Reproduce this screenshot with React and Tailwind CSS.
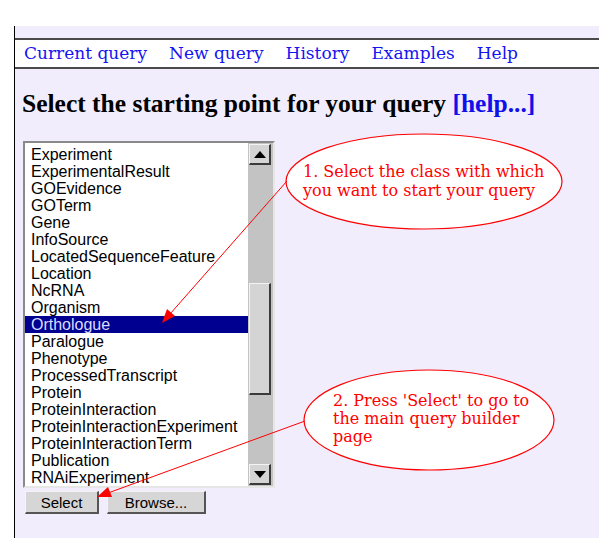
import React from 'react';

const classes = [
  'Experiment',
  'ExperimentalResult',
  'GOEvidence',
  'GOTerm',
  'Gene',
  'InfoSource',
  'LocatedSequenceFeature',
  'Location',
  'NcRNA',
  'Organism',
  'Orthologue',
  'Paralogue',
  'Phenotype',
  'ProcessedTranscript',
  'Protein',
  'ProteinInteraction',
  'ProteinInteractionExperiment',
  'ProteinInteractionTerm',
  'Publication',
  'RNAiExperiment',
];

const navLinks = ['Current query', 'New query', 'History', 'Examples', 'Help'];

const serif = { fontFamily: '"DejaVu Serif", serif' };

// little raised 3D box used for scroll arrows / thumb
const Raised = ({ className = '', children }) => (
  <div
    className={`bg-[#d4d4d4] border-t border-l border-[#f4f4f4] border-r-2 border-b-2 border-r-[#3a3a3a] border-b-[#3a3a3a] ${className}`}
  >
    {children}
  </div>
);

const Button = ({ label, width }) => (
  <button
    className={`${width} h-[23px] bg-[#d6d6d6] border-t border-l border-[#f4f4f4] border-r-2 border-b-2 border-r-[#555] border-b-[#555] text-[15px] text-black leading-none`}
  >
    {label}
  </button>
);

const App = () => {
  return (
    <div
      className="relative w-[616px] h-[556px] bg-white overflow-hidden"
      style={{ fontFamily: '"Liberation Sans", Arial, sans-serif' }}
    >
      <div className="ml-[14px] mt-[26px] w-[585px] h-[512px] bg-[#f1edfd] border-l border-black pt-[12px]">
        {/* nav bar */}
        <div
          className="h-[31px] bg-white border-t-2 border-b-2 border-[#4a4a4a] flex items-center gap-[22px] pl-[9px] text-[17px] text-[#1414f0]"
          style={serif}
        >
          {navLinks.map((l) => (
            <span key={l}>{l}</span>
          ))}
        </div>

        {/* heading */}
        <h1
          className="mt-[21px] pl-[7px] text-[25.5px] font-bold text-black leading-[28px] whitespace-nowrap"
          style={{ fontFamily: '"Liberation Serif", "Times New Roman", serif' }}
        >
          Select the starting point for your query{' '}
          <span className="text-[#1010e8]">[help...]</span>
        </h1>

        {/* listbox */}
        <div className="ml-[8px] mt-[23px] w-[252px] h-[347px] border-t-2 border-l-2 border-[#8a8a8a] border-r-2 border-b-2 border-r-[#e6e6e6] border-b-[#e6e6e6] flex">
          <div className="w-[223px] h-full bg-white pt-[3px] overflow-hidden text-[16px] text-black">
            {classes.map((c) => (
              <div
                key={c}
                className={`h-[17px] leading-[17px] pl-[6px] whitespace-nowrap ${
                  c === 'Orthologue' ? 'bg-[#000090] text-[#dcdcff]' : ''
                }`}
              >
                {c}
              </div>
            ))}
          </div>
          <div className="w-[25px] h-full bg-[#c3c3c3] flex flex-col pl-[1px] pr-[2px] pt-[1px] pb-[1px]">
            <Raised className="h-[21px] flex items-center justify-center">
              <svg width="12" height="7" viewBox="0 0 12 7">
                <polygon points="6,0 12,7 0,7" fill="#000" />
              </svg>
            </Raised>
            <div className="h-[118px]" />
            <Raised className="h-[112px]" />
            <div className="flex-1" />
            <Raised className="h-[21px] flex items-center justify-center">
              <svg width="12" height="7" viewBox="0 0 12 7">
                <polygon points="0,0 12,0 6,7" fill="#000" />
              </svg>
            </Raised>
          </div>
        </div>

        {/* buttons */}
        <div className="ml-[10px] mt-[3px] flex gap-[8px]">
          <Button label="Select" width="w-[74px]" />
          <Button label="Browse..." width="w-[99px]" />
        </div>
      </div>

      {/* annotation overlay */}
      <svg
        className="absolute left-0 top-0 pointer-events-none"
        width="616"
        height="556"
        viewBox="0 0 616 556"
      >
        <ellipse cx="424" cy="181.5" rx="138" ry="47.5" fill="#fff" stroke="#f00" strokeWidth="1.2" />
        <line x1="287" y1="181" x2="170" y2="314" stroke="#f00" strokeWidth="1" />
        <polygon points="162,323 175,316 167,309" fill="#f00" />

        <ellipse cx="429" cy="420" rx="125" ry="50" fill="#fff" stroke="#f00" strokeWidth="1.2" />
        <line x1="305" y1="421" x2="108" y2="493" stroke="#f00" strokeWidth="1" />
        <polygon points="97,497 112,497 108,487" fill="#f00" />
      </svg>

      <div
        className="absolute left-[303px] top-[162px] text-[16px] leading-[19px] text-[#f00]"
        style={serif}
      >
        1. Select the class with which
        <br />
        you want to start your query
      </div>
      <div
        className="absolute left-[333px] top-[392px] text-[16px] leading-[18px] text-[#f00]"
        style={serif}
      >
        2. Press 'Select' to go to
        <br />
        the main query builder
        <br />
        page
      </div>
    </div>
  );
};

export default App;
